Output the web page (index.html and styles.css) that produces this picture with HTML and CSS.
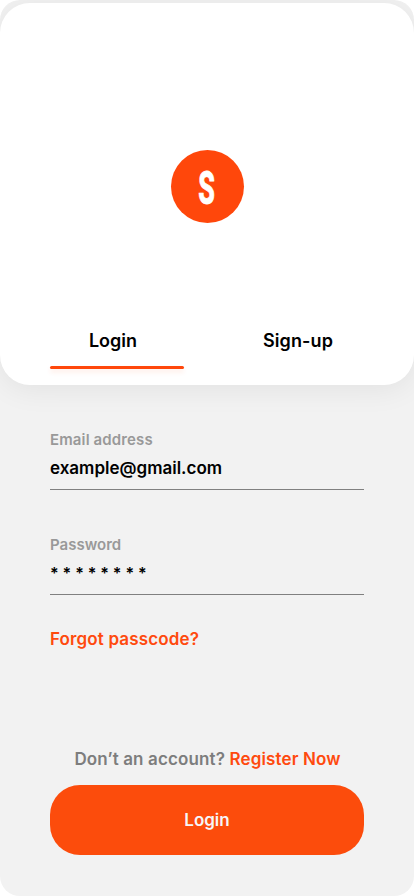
FILE: index.html
```html
<!DOCTYPE html>
<html lang="en">
<head>
<meta charset="utf-8">
<title>Login</title>
<link rel="stylesheet" href="styles.css">
</head>
<body>
<main class="screen">
  <header class="hero">
    <div class="logo"><span class="logo-letter">S</span></div>
    <nav class="tabs">
      <a class="tab tab-active">Login</a>
      <a class="tab tab-signup">Sign-up</a>
    </nav>
  </header>
  <form class="form">
    <div class="field">
      <span class="label">Email address</span>
      <span class="value">example@gmail.com</span>
    </div>
    <div class="field">
      <span class="label label-password">Password</span>
      <span class="value password">* * * * * * * *</span>
    </div>
    <a class="forgot">Forgot passcode?</a>
    <p class="register">Don’t an account? <a class="register-link">Register Now</a></p>
    <button class="submit" type="button">Login</button>
  </form>
</main>
</body>
</html>
```
FILE: styles.css
```css
* { box-sizing: border-box; }
body { margin: 0; background: #fff; font-family: Inter, sans-serif; }
.screen { height: 896px; background: #f2f2f2; border-radius: 20px; padding-top: 3px; overflow: hidden; }
.hero { height: 382px; background: #fff; border-radius: 30px; box-shadow: 0 4px 30px rgba(0,0,0,.07); padding: 147px 50px 0; display: flex; flex-direction: column; align-items: center; }
.logo { width: 73px; height: 73px; border-radius: 50%; background: #ff470b; display: flex; align-items: center; justify-content: center; }
.logo-letter { color: #fff; font-family: Roboto, sans-serif; font-size: 47px; font-weight: 800; line-height: 1; -webkit-text-stroke: .8px #fff; transform: translateY(1px) scaleX(.57); }
.tabs { display: flex; width: 314px; justify-content: space-between; margin-top: 96px; }
.tab { width: 134px; height: 50px; padding: 11px 8px 0 0; text-align: center; font-size: 18px; line-height: 22px; font-weight: 600; }
.tab-active { display: flex; flex-direction: column; justify-content: space-between; }
.tab-active::after { content: ""; width: 134px; height: 3px; border-radius: 2px; background: #ff470b; box-shadow: 0 3px 5px rgba(255,71,11,.12); }
.tab-signup { padding: 11px 0 0 2px; letter-spacing: .1px; }
.form { padding: 46px 50px 0; display: flex; flex-direction: column; }
.field { height: 59px; border-bottom: 1px solid #808080; margin-bottom: 46px; display: flex; flex-direction: column; }
.label { font-size: 15px; line-height: 18px; font-weight: 600; color: #999; letter-spacing: .13px; }
.label-password { letter-spacing: 0; }
.value { font-size: 17px; line-height: 21px; font-weight: 600; margin-top: 9px; }
.password { font-size: 16px; letter-spacing: -.05px; }
.forgot { font-size: 17px; line-height: 21px; font-weight: 600; color: #ff4a0e; margin-top: -12px; letter-spacing: .14px; }
.register { margin: 99px -10px 15px -9px; font-size: 17px; line-height: 21px; font-weight: 600; color: #7d7d7d; text-align: center; letter-spacing: .13px; }
.register-link { color: #ff4a0e; }
.submit { height: 70px; border: 0; border-radius: 30px; background: #fc4c0c; color: #f6f6f9; font: 600 17px Inter, sans-serif; }
```
